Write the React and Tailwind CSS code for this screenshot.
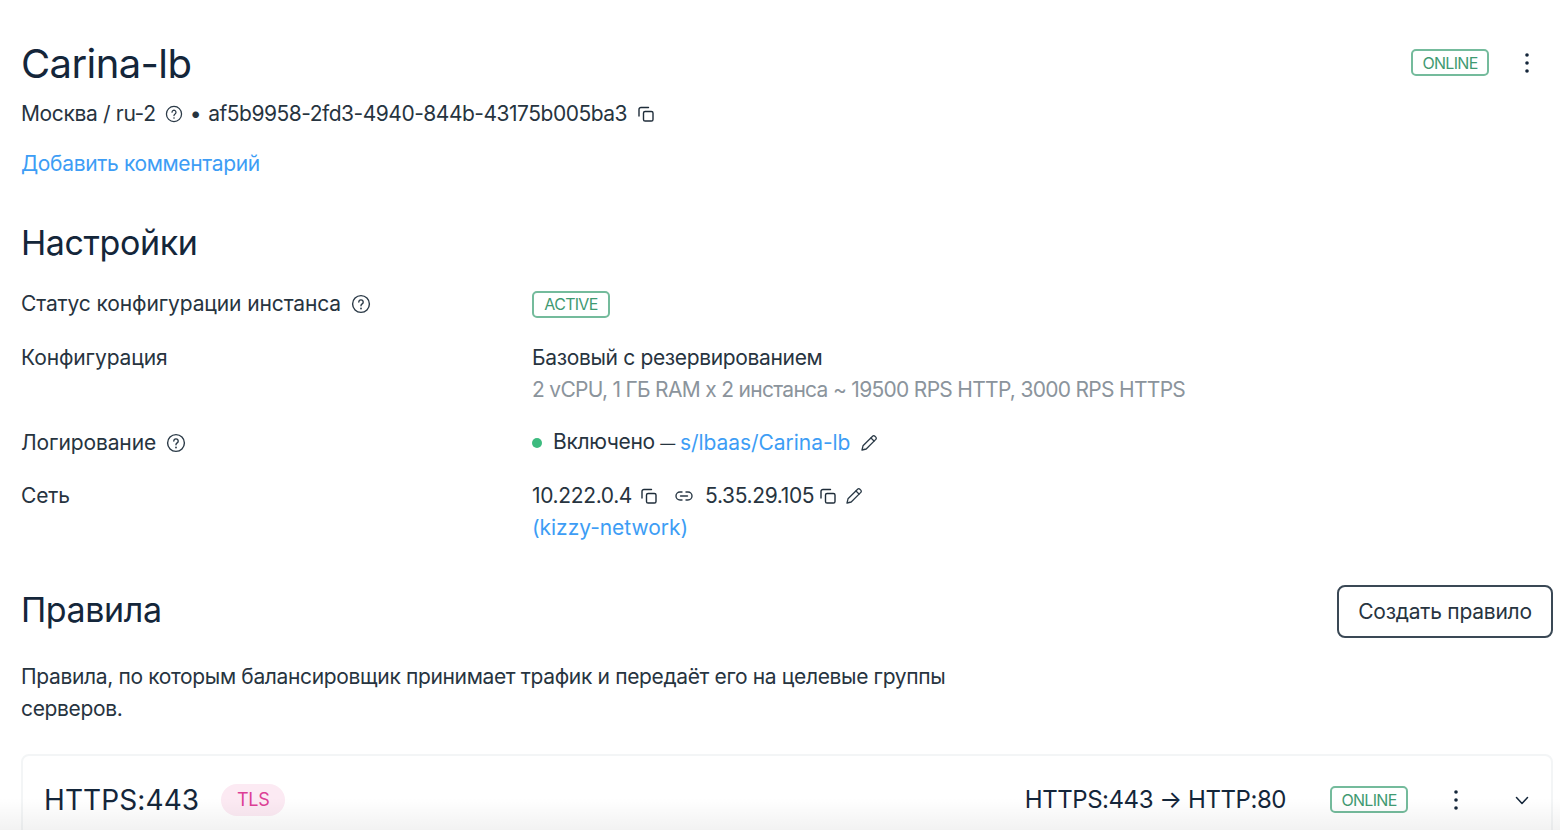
const F = { fontFamily: '"Inter", "Noto Sans", sans-serif' };

function Help({ s = 20 }) {
  return (
    <svg width={s} height={s} viewBox="0 0 20 20" fill="none" stroke="#2b3a47" strokeWidth="1.4" strokeLinecap="round" strokeLinejoin="round" className="shrink-0">
      <circle cx="10" cy="10" r="8.4" />
      <path d="M7.8 8a2.2 2.2 0 1 1 3.4 1.9c-.8.5-1.2.9-1.2 1.8" />
      <path d="M10 14.4v.1" strokeWidth="1.8" />
    </svg>
  );
}
function Copy() {
  return (
    <svg width="18" height="18" viewBox="0 0 18 18" fill="none" stroke="#1f2d3a" strokeWidth="1.4" strokeLinecap="round" strokeLinejoin="round" className="shrink-0">
      <rect x="6.5" y="6.5" width="9.5" height="9.5" rx="1.6" />
      <path d="M11.5 2.5H4a2 2 0 0 0-2 2v6.5" />
    </svg>
  );
}
function Pencil() {
  return (
    <svg width="18" height="18" viewBox="0 0 18 18" fill="none" stroke="#2b3a47" strokeWidth="1.3" strokeLinecap="round" strokeLinejoin="round" className="shrink-0">
      <path d="M2 16l1-4.2L12.6 2.2a1.6 1.6 0 0 1 2.3 0l.9.9a1.6 1.6 0 0 1 0 2.3L6.200 15z" />
      <path d="M11 4l3 3" />
    </svg>
  );
}
function LinkIcon() {
  return (
    <svg width="20" height="20" viewBox="0 0 20 20" fill="none" stroke="#2b3a47" strokeWidth="1.4" strokeLinecap="round" className="shrink-0">
      <path d="M8 6H6a4 4 0 0 0 0 8h2" />
      <path d="M12 6h2a4 4 0 0 1 0 8h-2" />
      <path d="M6.500 10h7" />
    </svg>
  );
}
function Dots() {
  return (
    <svg width="6" height="22" viewBox="0 0 6 22" className="shrink-0" fill="#14263a">
      <circle cx="3" cy="3" r="1.800" />
      <circle cx="3" cy="11" r="1.800" />
      <circle cx="3" cy="19" r="1.800" />
    </svg>
  );
}
function Badge({ children }) {
  return (
    <span className="flex h-[27px] w-[78px] items-center justify-center rounded-[5px] border-2 border-[#74bb9c] text-[16px] tracking-[-0.7px] text-[#3f9a72]">
      {children}
    </span>
  );
}
function Row({ label, help, children, className = "" }) {
  return (
    <div className={`flex ${className}`}>
      <div className="flex h-8 w-[511px] shrink-0 items-center gap-[10px] tracking-[-0.12px]">
        <span>{label}</span>
        {help && <Help />}
      </div>
      <div className="leading-8">{children}</div>
    </div>
  );
}

export default function App() {
  return (
    <div style={F} className="relative h-[830px] w-[1560px] overflow-hidden bg-white pl-[21px] pr-[7px] text-[21px] tracking-[-0.35px] text-[#27343f]">
      <div className="mt-[39px] flex h-[50px] items-center justify-between">
        <h1 className="text-[40px] leading-[50px] tracking-[-0.6px] text-[#14263a]">Carina-lb</h1>
        <div className="flex items-center pb-[3px] pr-[23px]">
          <Badge>ONLINE</Badge>
          <span className="ml-[35px] flex"><Dots /></span>
        </div>
      </div>
      <div className="mt-[9px] flex h-8 items-center">
        <span>Москва / ru-2</span>
        <span className="ml-[9px]"><Help s={18} /></span>
        <span className="ml-[7px] mr-[7px]">•</span>
        <span className="tracking-[-0.49px]">af5b9958-2fd3-4940-844b-43175b005ba3</span>
        <span className="ml-[10px]"><Copy /></span>
      </div>
      <div className="mt-[18px] h-8 leading-8 text-[#3d9df5]">Добавить комментарий</div>

      <h2 className="mt-[41px] text-[34px] leading-[44px] tracking-[-0.4px] text-[#14263a]">Настройки</h2>

      <div className="mt-[23px]">
        <Row label="Статус конфигурации инстанса" help>
          <div className="flex h-8 items-center"><Badge>ACTIVE</Badge></div>
        </Row>
        <Row label="Конфигурация" className="mt-[22px]">
          <div>Базовый с резервированием</div>
          <div className="tracking-[-0.7px] text-[#8b949c]">2 vCPU, 1 ГБ RAM x 2 инстанса ~ 19500 RPS HTTP, 3000 RPS HTTPS</div>
        </Row>
        <Row label="Логирование" help className="mt-[21px]">
          <div className="flex h-8 items-center">
            <span className="mr-[11px] h-[10px] w-[10px] rounded-full bg-[#3dbb7f]" />
            <span>Включено <span className="text-[15px]">—</span></span>
            <span className="ml-[5px] tracking-[-0.05px] text-[#3d9df5]">s/lbaas/Carina-lb</span>
            <span className="ml-[10px]"><Pencil /></span>
          </div>
        </Row>
        <Row label="Сеть" className="mt-[21px]">
          <div className="flex h-8 items-center">
            <span>10.222.0.4</span>
            <span className="ml-[8px]"><Copy /></span>
            <span className="ml-[16px]"><LinkIcon /></span>
            <span className="ml-[11px]">5.35.29.105</span>
            <span className="ml-[5px]"><Copy /></span>
            <span className="ml-[8px]"><Pencil /></span>
          </div>
          <div className="tracking-[-0.05px] text-[#3d9df5]">(kizzy-network)</div>
        </Row>
      </div>

      <div className="mt-[41px] flex h-[53px] items-center justify-between">
        <h2 className="pb-[4px] text-[34px] leading-[44px] tracking-[-0.4px] text-[#14263a]">Правила</h2>
        <button className="flex h-[53px] w-[216px] items-center justify-center rounded-[8px] border-2 border-[#3a4855] text-[21px] tracking-[-0.25px] text-[#27343f]">
          Создать правило
        </button>
      </div>

      <p className="mt-[23px] w-[960px] leading-8">
        Правила, по которым балансировщик принимает трафик и передаёт его на целевые группы серверов.
      </p>

      <div className="mt-[29px] h-[100px] rounded-[8px] border-2 border-[#f3f5f6] pl-[21px] pr-[20px]">
        <div className="flex h-[87px] items-center">
          <span className="text-[28px] tracking-[0.1px] text-[#14263a]">HTTPS:443</span>
          <span className="ml-[22px] flex h-[32px] w-[64px] items-center justify-center rounded-full bg-[#fceaf3] text-[18px] text-[#dd3f96]">TLS</span>
          <span className="ml-auto text-[24px] tracking-[-0.45px] text-[#14263a]">HTTPS:443 → HTTP:80</span>
          <span className="ml-[44px] flex"><Badge>ONLINE</Badge></span>
          <span className="ml-[45px] flex"><Dots /></span>
          <svg className="ml-[54px]" width="18" height="18" viewBox="0 0 18 18" fill="none" stroke="#14263a" strokeWidth="1.5" strokeLinecap="round" strokeLinejoin="round">
            <path d="M3.500 6.500L9 12.500l5.500-6" />
          </svg>
        </div>
      </div>

      <div className="pointer-events-none absolute inset-x-0 bottom-0 h-[32px] bg-gradient-to-b from-transparent to-[#0000000d]" />
    </div>
  );
}
